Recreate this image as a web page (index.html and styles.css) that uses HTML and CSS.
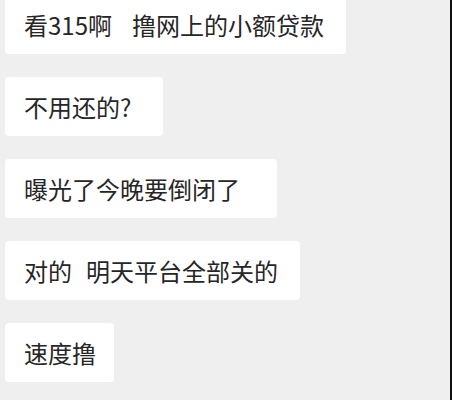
FILE: index.html
```html
<!DOCTYPE html>
<html lang="zh-CN">

<head>
    <meta charset="UTF-8">
    <meta name="viewport" content="width=device-width, initial-scale=1.0">
    <title>聊天记录</title>
    <link rel="stylesheet" href="styles.css">
</head>

<body>

    <div class="chat">
        <div class="msg">看315啊<span class="gap wide"></span>撸网上的小额贷款</div>
        <div class="msg roomy">不用还的?</div>
        <div class="msg roomy wider">曝光了今晚要倒闭了</div>
        <div class="msg">对的<span class="gap"></span>明天平台全部关的</div>
        <div class="msg tight">速度撸</div>
    </div>

</body>

</html>
```

FILE: styles.css
```css
html,
body {
    margin: 0;
    padding: 0;
    height: 100%;
    overflow: hidden;
}

body {
    background: #efefef;
    border-right: 2px solid #111;
    box-sizing: border-box;
    font-family: "Noto Sans CJK SC", "Noto Sans", sans-serif;
}

.chat {
    display: flex;
    flex-direction: column;
    align-items: flex-start;
    gap: 23px;
    margin-top: -5px;
    padding-left: 5px;
}

.msg {
    background: #fff;
    color: #262626;
    font-size: 24px;
    line-height: 27px;
    padding: 16px 22px 16px 19px;
    border-radius: 4px;
    white-space: nowrap;
}

/* a couple of bubbles sit a little wider in the shot */
.msg.roomy {
    padding-right: 32px;
}

.msg.wider {
    padding-right: 37px;
}

.msg.tight {
    padding-right: 18px;
}

.gap {
    display: inline-block;
    width: 14px;
}

.gap.wide {
    width: 20px;
}
```
